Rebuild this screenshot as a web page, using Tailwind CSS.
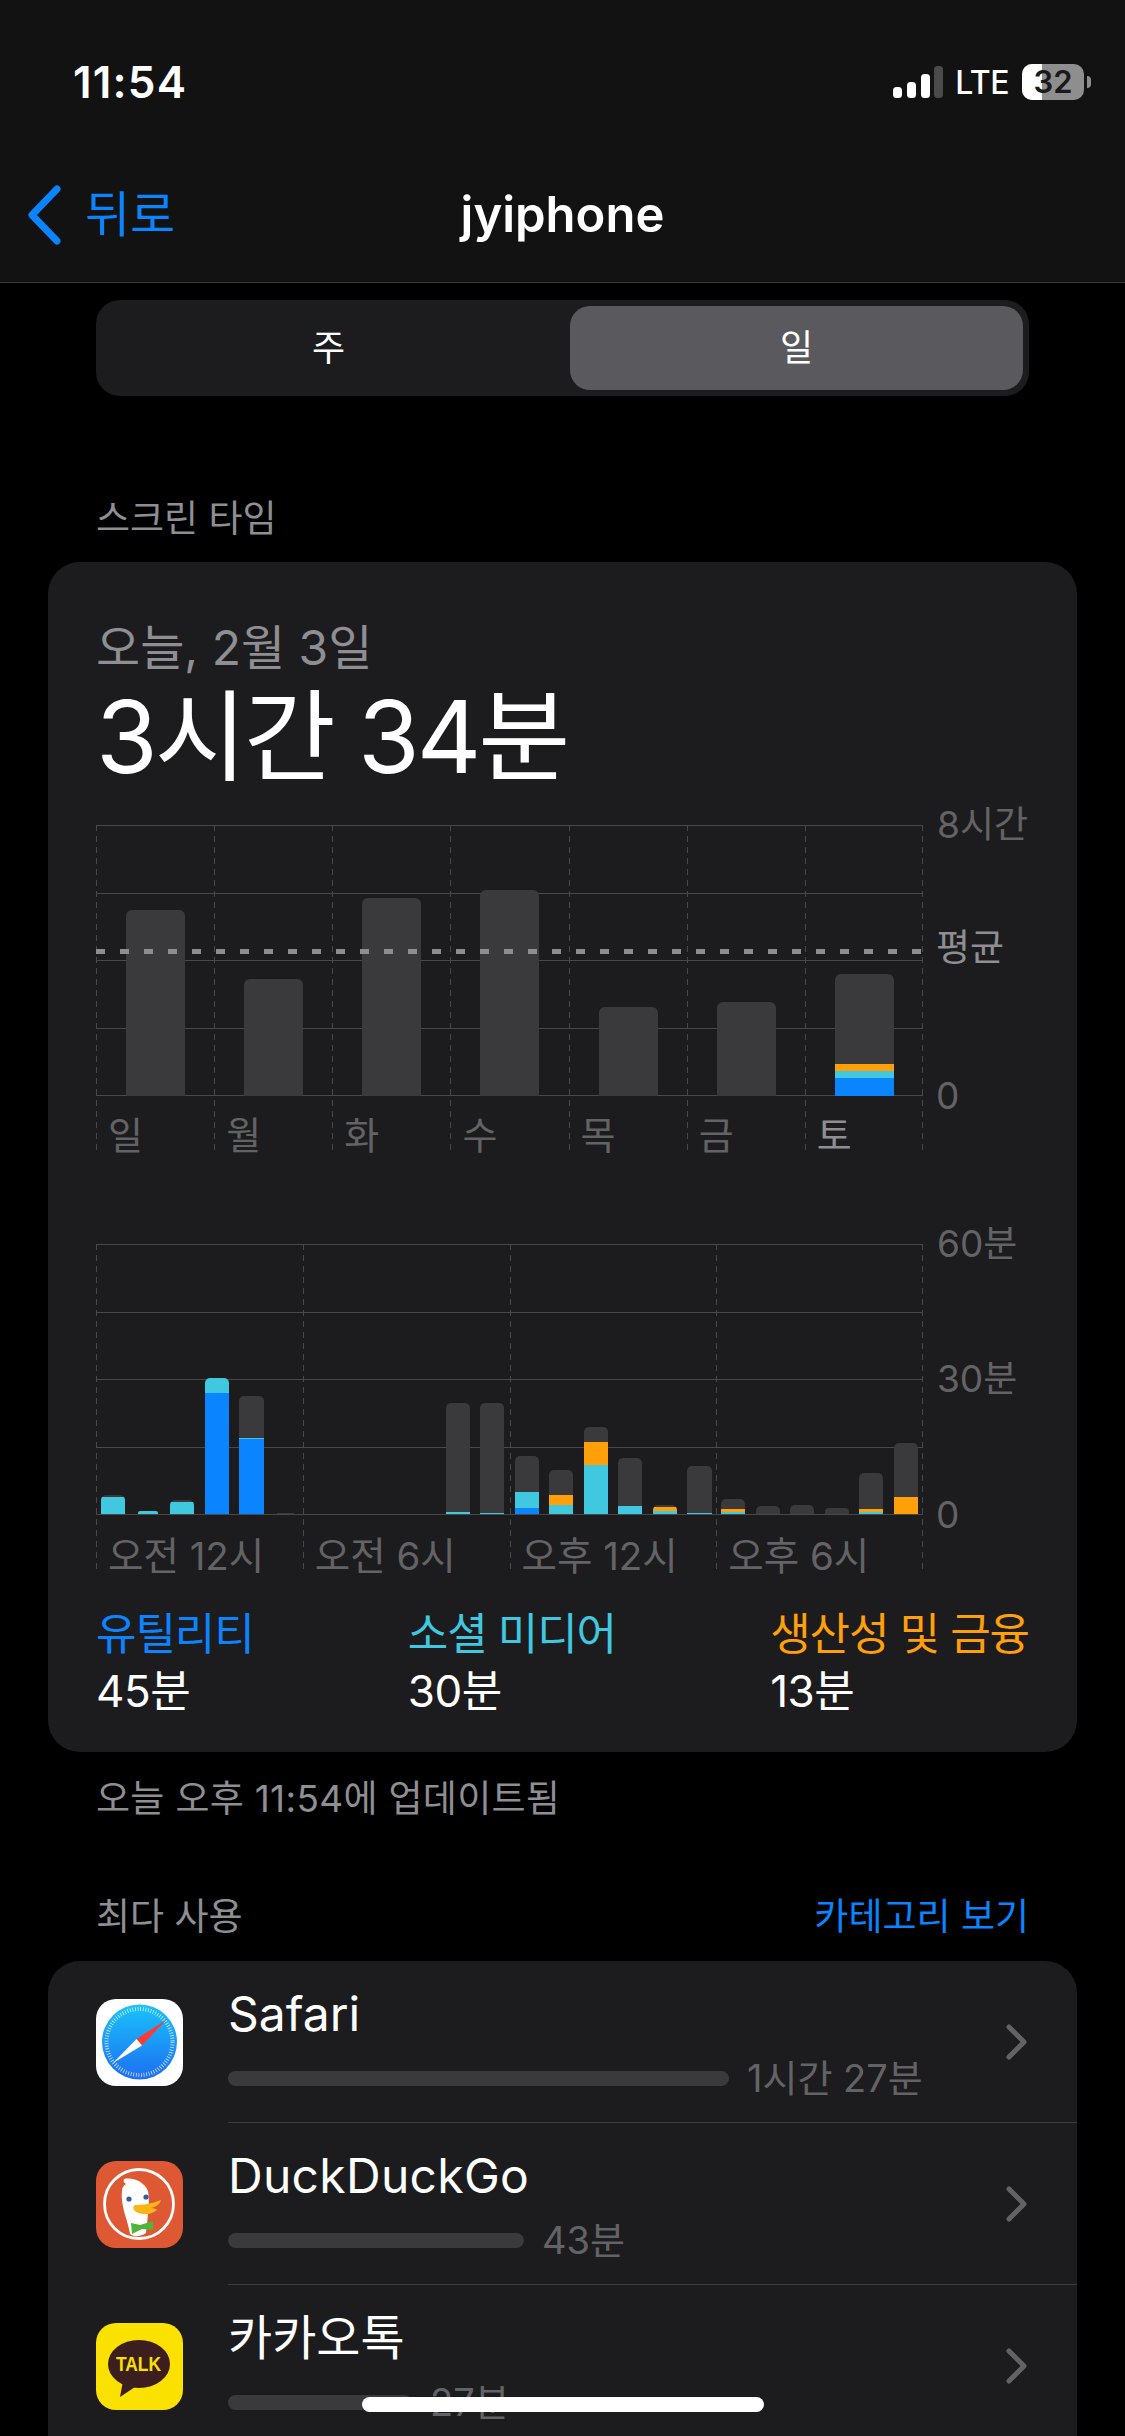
<!DOCTYPE html>
<html lang="ko">
<head>
<meta charset="utf-8">
<script src="https://cdn.jsdelivr.net/npm/@tailwindcss/browser@4"></script>
<title>jyiphone</title>
</head>
<body class="bg-black">
<div class="relative w-[1125px] h-[2436px] overflow-hidden bg-black text-white font-['Inter','Noto_Sans_CJK_KR',sans-serif]">

  <!-- Header -->
  <header class="h-[283px] bg-[#121212] border-b border-[#38383a]">
    <div class="pt-[64px] pl-[73px] pr-[34px] h-[100px] flex items-center justify-between">
      <span class="text-[44px] leading-[36px] font-semibold tracking-[1.2px]">11:54</span>
      <div class="flex items-center">
        <svg width="50" height="32" viewBox="0 0 50 32" class="mr-[12px]"><rect x="0" y="21" width="9" height="11" rx="3.5" fill="#fff"/><rect x="14" y="16" width="9" height="16" rx="3.5" fill="#fff"/><rect x="28" y="8" width="9" height="24" rx="3.5" fill="#fff"/><rect x="41" y="0" width="9" height="32" rx="3.5" fill="#4a4a4a"/></svg>
        <span class="text-[32px] leading-[36px] font-medium tracking-[-0.5px] mr-[13px] pt-[2px]">LTE</span>
        <div class="relative w-[62px] h-[36px] rounded-[10px] bg-[#8e8e8e] overflow-hidden flex items-center justify-center">
          <div class="absolute inset-y-0 left-0 w-[20px] bg-white"></div>
          <span class="relative text-[31px] leading-[36px] font-semibold text-[#1a1a1a]">32</span>
        </div>
        <div class="ml-[3px] w-[4px] h-[12px] rounded-r-full bg-[#8e8e8e]"></div>
      </div>
    </div>
    <div class="mt-[85px] h-[56px] grid grid-cols-[1fr_auto_1fr] items-center">
      <div class="flex items-center pl-[27px] text-[#0a84ff]">
        <svg width="36" height="60" viewBox="0 0 36 60" class="mr-[22px]"><path d="M30 4 L5 30 L30 56" fill="none" stroke="#0a84ff" stroke-width="7" stroke-linecap="round" stroke-linejoin="round"/></svg>
        <span class="text-[49px] leading-[56px]">뒤로</span>
      </div>
      <span class="text-[49px] leading-[56px] font-semibold">jyiphone</span>
      <span></span>
    </div>
  </header>

  <!-- Segment -->
  <div class="mt-[17px] mx-[96px] h-[96px] rounded-[24px] bg-[#1c1c1e] p-[6px] grid grid-cols-2 gap-[15px] text-[36px]">
    <div class="flex items-center justify-center">주</div>
    <div class="flex items-center justify-center rounded-[20px] bg-[#5a5a5e]">일</div>
  </div>

  <div class="mt-[101px] mx-[96px] h-[44px] flex items-center text-[37px] text-[#8e8e93]">스크린 타임</div>

  <!-- Screen time card -->
  <section class="mt-[21px] mx-[48px] h-[1190px] rounded-[32px] bg-[#1c1c1e] px-[48px] pt-[58px]">
    <div class="h-[56px] flex items-center text-[48px] text-[#8e8e93]">오늘, 2월 3일</div>
    <div class="mt-[6px] h-[110px] flex items-center text-[100px] leading-none tracking-[-3px]">3시간 34분</div>

    <!-- Weekly chart -->
    <div class="relative mt-[33px] w-[827px] h-[330px]">
      <div class="absolute inset-x-0 top-0 h-[271px] grid grid-rows-4 border-b border-[#48484a]">
        <div class="border-t border-[#48484a]"></div>
        <div class="border-t border-[#48484a]"></div>
        <div class="border-t border-[#48484a]"></div>
        <div class="border-t border-[#48484a]"></div>
      </div>
      <div class="absolute inset-0 grid grid-cols-7 text-[38px] text-[#636366]">
        <div class="relative h-full bg-[repeating-linear-gradient(to_bottom,#48484a_0,#48484a_6px,transparent_6px,transparent_11px)] bg-no-repeat bg-[length:1px_100%]"><span class="absolute left-[12px] top-[285px] leading-[50px]">일</span><div class="absolute bottom-[59px] left-[30px] w-[59px] h-[186px] rounded-t-[6px] bg-[#3a3a3c]"></div></div>
        <div class="relative h-full bg-[repeating-linear-gradient(to_bottom,#48484a_0,#48484a_6px,transparent_6px,transparent_11px)] bg-no-repeat bg-[length:1px_100%]"><span class="absolute left-[12px] top-[285px] leading-[50px]">월</span><div class="absolute bottom-[59px] left-[30px] w-[59px] h-[117px] rounded-t-[6px] bg-[#3a3a3c]"></div></div>
        <div class="relative h-full bg-[repeating-linear-gradient(to_bottom,#48484a_0,#48484a_6px,transparent_6px,transparent_11px)] bg-no-repeat bg-[length:1px_100%]"><span class="absolute left-[12px] top-[285px] leading-[50px]">화</span><div class="absolute bottom-[59px] left-[30px] w-[59px] h-[198px] rounded-t-[6px] bg-[#3a3a3c]"></div></div>
        <div class="relative h-full bg-[repeating-linear-gradient(to_bottom,#48484a_0,#48484a_6px,transparent_6px,transparent_11px)] bg-no-repeat bg-[length:1px_100%]"><span class="absolute left-[12px] top-[285px] leading-[50px]">수</span><div class="absolute bottom-[59px] left-[30px] w-[59px] h-[206px] rounded-t-[6px] bg-[#3a3a3c]"></div></div>
        <div class="relative h-full bg-[repeating-linear-gradient(to_bottom,#48484a_0,#48484a_6px,transparent_6px,transparent_11px)] bg-no-repeat bg-[length:1px_100%]"><span class="absolute left-[12px] top-[285px] leading-[50px]">목</span><div class="absolute bottom-[59px] left-[30px] w-[59px] h-[89px] rounded-t-[6px] bg-[#3a3a3c]"></div></div>
        <div class="relative h-full bg-[repeating-linear-gradient(to_bottom,#48484a_0,#48484a_6px,transparent_6px,transparent_11px)] bg-no-repeat bg-[length:1px_100%]"><span class="absolute left-[12px] top-[285px] leading-[50px]">금</span><div class="absolute bottom-[59px] left-[30px] w-[59px] h-[94px] rounded-t-[6px] bg-[#3a3a3c]"></div></div>
        <div class="relative h-full bg-[repeating-linear-gradient(to_bottom,#48484a_0,#48484a_6px,transparent_6px,transparent_11px)] bg-no-repeat bg-[length:1px_100%]"><span class="absolute left-[12px] top-[285px] leading-[50px] text-[#8e8e93]">토</span>
          <div class="absolute bottom-[59px] left-[30px] w-[59px] h-[122px] rounded-t-[6px] overflow-hidden bg-[#3a3a3c] flex flex-col justify-end"><div class="h-[7px] bg-[#ff9f0a]"></div><div class="h-[7px] bg-[#40c8e0]"></div><div class="h-[18px] bg-[#0a84ff]"></div></div>
        </div>
      </div>
      <div class="absolute right-0 top-0 bottom-0 w-px bg-[repeating-linear-gradient(to_bottom,#48484a_0,#48484a_6px,transparent_6px,transparent_11px)]"></div>
      <div class="absolute inset-x-0 top-[124px] h-[5px] bg-[repeating-linear-gradient(to_right,#8e8e8e_0,#8e8e8e_9px,transparent_9px,transparent_24px)]"></div>
      <div class="text-[37px] leading-[50px] text-[#636366]">
        <span class="absolute left-[841px] top-[-25px] whitespace-nowrap">8시간</span>
        <span class="absolute left-[840px] top-[98px] whitespace-nowrap text-[#8e8e93]">평균</span>
        <span class="absolute left-[840px] top-[246px] whitespace-nowrap">0</span>
      </div>
    </div>

    <!-- Hourly chart -->
    <div class="relative mt-[89px] w-[827px] h-[329px]">
      <div class="absolute inset-x-0 top-0 h-[271px] grid grid-rows-4 border-b border-[#48484a]">
        <div class="border-t border-[#48484a]"></div>
        <div class="border-t border-[#48484a]"></div>
        <div class="border-t border-[#48484a]"></div>
        <div class="border-t border-[#48484a]"></div>
      </div>
      <div class="absolute inset-0 grid grid-cols-4 text-[38.5px] text-[#636366]">
        <div class="relative h-full bg-[repeating-linear-gradient(to_bottom,#48484a_0,#48484a_6px,transparent_6px,transparent_11px)] bg-no-repeat bg-[length:1px_100%]"><span class="absolute left-[12px] top-[287px] leading-[50px] whitespace-nowrap">오전 12시</span></div>
        <div class="relative h-full bg-[repeating-linear-gradient(to_bottom,#48484a_0,#48484a_6px,transparent_6px,transparent_11px)] bg-no-repeat bg-[length:1px_100%]"><span class="absolute left-[12px] top-[287px] leading-[50px] whitespace-nowrap">오전 6시</span></div>
        <div class="relative h-full bg-[repeating-linear-gradient(to_bottom,#48484a_0,#48484a_6px,transparent_6px,transparent_11px)] bg-no-repeat bg-[length:1px_100%]"><span class="absolute left-[12px] top-[287px] leading-[50px] whitespace-nowrap">오후 12시</span></div>
        <div class="relative h-full bg-[repeating-linear-gradient(to_bottom,#48484a_0,#48484a_6px,transparent_6px,transparent_11px)] bg-no-repeat bg-[length:1px_100%]"><span class="absolute left-[12px] top-[287px] leading-[50px] whitespace-nowrap">오후 6시</span></div>
      </div>
      <div class="absolute right-0 top-0 bottom-0 w-px bg-[repeating-linear-gradient(to_bottom,#48484a_0,#48484a_6px,transparent_6px,transparent_11px)]"></div>
      <div class="absolute inset-x-0 top-0 h-[270px] grid grid-cols-24 items-end justify-items-center">
        <div class="w-[24px] rounded-t-[5px] overflow-hidden"><div class="h-[2px] bg-[#3a3a3c]"></div><div class="h-[17px] bg-[#40c8e0]"></div></div>
        <div class="w-[20px] rounded-t-[2px] overflow-hidden"><div class="h-[3px] bg-[#40c8e0]"></div></div>
        <div class="w-[24px] rounded-t-[5px] overflow-hidden"><div class="h-[2px] bg-[#3a3a3c]"></div><div class="h-[12px] bg-[#40c8e0]"></div></div>
        <div class="w-[24px] rounded-t-[5px] overflow-hidden"><div class="h-[15px] bg-[#40c8e0]"></div><div class="h-[121px] bg-[#0a84ff]"></div></div>
        <div class="w-[25px] rounded-t-[5px] overflow-hidden"><div class="h-[42px] bg-[#3a3a3c]"></div><div class="h-[1px] bg-[#40c8e0]"></div><div class="h-[75px] bg-[#0a84ff]"></div></div>
        <div class="w-[17px] h-[1px] bg-[#3a3a3c]"></div>
        <div></div><div></div><div></div><div></div>
        <div class="w-[24px] rounded-t-[5px] overflow-hidden"><div class="h-[109px] bg-[#3a3a3c]"></div><div class="h-[2px] bg-[#40c8e0]"></div></div>
        <div class="w-[24px] rounded-t-[5px] overflow-hidden"><div class="h-[110px] bg-[#3a3a3c]"></div><div class="h-[1px] bg-[#40c8e0]"></div></div>
        <div class="w-[24px] rounded-t-[5px] overflow-hidden"><div class="h-[36px] bg-[#3a3a3c]"></div><div class="h-[16px] bg-[#40c8e0]"></div><div class="h-[6px] bg-[#0a84ff]"></div></div>
        <div class="w-[24px] rounded-t-[5px] overflow-hidden"><div class="h-[25px] bg-[#3a3a3c]"></div><div class="h-[10px] bg-[#ff9f0a]"></div><div class="h-[9px] bg-[#40c8e0]"></div></div>
        <div class="w-[24px] rounded-t-[5px] overflow-hidden"><div class="h-[15px] bg-[#3a3a3c]"></div><div class="h-[23px] bg-[#ff9f0a]"></div><div class="h-[49px] bg-[#40c8e0]"></div></div>
        <div class="w-[24px] rounded-t-[5px] overflow-hidden"><div class="h-[48px] bg-[#3a3a3c]"></div><div class="h-[8px] bg-[#40c8e0]"></div></div>
        <div class="w-[24px] rounded-t-[5px] overflow-hidden"><div class="h-[2px] bg-[#3a3a3c]"></div><div class="h-[4px] bg-[#ff9f0a]"></div><div class="h-[3px] bg-[#40c8e0]"></div></div>
        <div class="w-[25px] rounded-t-[5px] overflow-hidden"><div class="h-[47px] bg-[#3a3a3c]"></div><div class="h-[1px] bg-[#40c8e0]"></div></div>
        <div class="w-[24px] rounded-t-[5px] overflow-hidden"><div class="h-[10px] bg-[#3a3a3c]"></div><div class="h-[3px] bg-[#ff9f0a]"></div><div class="h-[2px] bg-[#40c8e0]"></div></div>
        <div class="w-[24px] h-[8px] rounded-t-[5px] bg-[#3a3a3c]"></div>
        <div class="w-[24px] h-[9px] rounded-t-[5px] bg-[#3a3a3c]"></div>
        <div class="w-[24px] h-[6px] rounded-t-[4px] bg-[#3a3a3c]"></div>
        <div class="w-[24px] rounded-t-[5px] overflow-hidden"><div class="h-[36px] bg-[#3a3a3c]"></div><div class="h-[3px] bg-[#ff9f0a]"></div><div class="h-[2px] bg-[#40c8e0]"></div></div>
        <div class="w-[24px] rounded-t-[5px] overflow-hidden"><div class="h-[54px] bg-[#3a3a3c]"></div><div class="h-[17px] bg-[#ff9f0a]"></div></div>
      </div>
      <div class="text-[37px] leading-[50px] text-[#636366]">
        <span class="absolute left-[841px] top-[-25px] whitespace-nowrap">60분</span>
        <span class="absolute left-[841px] top-[110px] whitespace-nowrap">30분</span>
        <span class="absolute left-[840px] top-[246px] whitespace-nowrap">0</span>
      </div>
    </div>

    <!-- Legend -->
    <div class="mt-[33px] flex justify-between">
      <div><div class="h-[56px] flex items-center text-[44px] tracking-[-1.1px] text-[#0a84ff] whitespace-nowrap">유틸리티</div><div class="mt-[4px] h-[50px] flex items-center text-[44px] tracking-[-0.5px]">45분</div></div>
      <div><div class="h-[56px] flex items-center text-[44px] tracking-[-1.1px] text-[#40c8e0] whitespace-nowrap">소셜 미디어</div><div class="mt-[4px] h-[50px] flex items-center text-[44px] tracking-[-0.5px]">30분</div></div>
      <div><div class="h-[56px] flex items-center text-[44px] tracking-[-1.1px] text-[#ff9f0a] whitespace-nowrap">생산성 및 금융</div><div class="mt-[4px] h-[50px] flex items-center text-[44px] tracking-[-0.5px]">13분</div></div>
    </div>
  </section>

  <div class="mt-[25px] mx-[96px] h-[44px] flex items-center text-[37px] tracking-[0.3px] text-[#8e8e93]">오늘 오후 11:54에 업데이트됨</div>

  <div class="mt-[74px] mx-[96px] h-[44px] flex items-center justify-between text-[37px] text-[#8e8e93]">
    <span>최다 사용</span>
    <span class="text-[#0a84ff]">카테고리 보기</span>
  </div>

  <!-- Most used -->
  <section class="mt-[22px] mx-[48px] h-[520px] rounded-t-[32px] bg-[#1c1c1e]">
    <div class="h-[162px] flex items-center pl-[48px]">
      <svg width="87" height="87" viewBox="0 0 87 87" class="shrink-0 rounded-[20px]">
        <defs><linearGradient id="sf" x1="0" y1="0" x2="0" y2="1"><stop offset="0" stop-color="#1ac3fb"/><stop offset="1" stop-color="#1d6ef1"/></linearGradient></defs>
        <rect width="87" height="87" fill="#fff"/>
        <circle cx="43.5" cy="43" r="37.5" fill="url(#sf)"/>
        <circle cx="43.5" cy="43" r="33" fill="none" stroke="#fff" stroke-opacity=".8" stroke-width="4" stroke-dasharray="0.8 1.8"/>
        <polygon points="70,21 40.5,40 46,46.5" fill="#ff3b30"/>
        <polygon points="17,64 40.5,40 46,46.5" fill="#fff"/>
      </svg>
      <div class="ml-[45px] flex-1 h-full flex items-center border-b border-[#3d3d40]">
        <div class="flex-1 self-stretch pt-[23px]">
          <div class="text-[48px] leading-[60px]">Safari</div>
          <div class="mt-[27px] flex items-center"><div class="w-[501px] h-[15px] rounded-full bg-[#3a3a3c]"></div><span class="ml-[18px] text-[38px] leading-[15px] text-[#636366] whitespace-nowrap">1시간 27분</span></div>
        </div>
        <svg width="21" height="36" viewBox="0 0 21 36" class="mr-[50px]"><path d="M3 3 L18 18 L3 33" fill="none" stroke="#636366" stroke-width="5" stroke-linecap="round" stroke-linejoin="round"/></svg>
      </div>
    </div>
    <div class="h-[162px] flex items-center pl-[48px]">
      <svg width="87" height="87" viewBox="0 0 87 87" class="shrink-0 rounded-[20px]">
        <rect width="87" height="87" fill="#de5833"/>
        <circle cx="43" cy="43" r="34.5" fill="none" stroke="#fff" stroke-width="2.8"/>
        <path d="M28 18 C36 16 48 20 52 30 C54 40 52 54 50 72 C44 76 38 76 34 73 C32 60 24 44 26 30 C26 26 28 24 30 23 C28 22 27 20 28 18 Z" fill="#fff"/>
        <path d="M39 44 C46 44 56 43 65 39 C64 43 60 46 55 47 C58 47 60 48 61 49 C54 55 42 54 38 49 C37 47 37 45 39 44 Z" fill="#fdb515"/>
        <path d="M35 62 L44 64 L57 60 L57 69 L46 68 L36 73 Z" fill="#4db53a"/>
        <circle cx="33" cy="38" r="2.6" fill="#3a5ba0"/><circle cx="50" cy="36" r="2.6" fill="#3a5ba0"/>
      </svg>
      <div class="ml-[45px] flex-1 h-full flex items-center border-b border-[#3d3d40]">
        <div class="flex-1 self-stretch pt-[23px]">
          <div class="text-[48px] leading-[60px] tracking-[0.3px]">DuckDuckGo</div>
          <div class="mt-[27px] flex items-center"><div class="w-[296px] h-[15px] rounded-full bg-[#3a3a3c]"></div><span class="ml-[18px] text-[38px] leading-[15px] text-[#636366] whitespace-nowrap">43분</span></div>
        </div>
        <svg width="21" height="36" viewBox="0 0 21 36" class="mr-[50px]"><path d="M3 3 L18 18 L3 33" fill="none" stroke="#636366" stroke-width="5" stroke-linecap="round" stroke-linejoin="round"/></svg>
      </div>
    </div>
    <div class="h-[162px] flex items-center pl-[48px]">
      <svg width="87" height="87" viewBox="0 0 87 87" class="shrink-0 rounded-[20px]">
        <rect width="87" height="87" fill="#fae100"/>
        <ellipse cx="43" cy="41" rx="31" ry="24" fill="#3c1e1e"/>
        <path d="M27 58 L24 74 L42 62 Z" fill="#3c1e1e"/>
        <text x="20" y="48" textLength="45" lengthAdjust="spacingAndGlyphs" font-family="Liberation Sans" font-weight="700" font-size="19.5" fill="#fae100">TALK</text>
      </svg>
      <div class="ml-[45px] flex-1 h-full flex items-center">
        <div class="flex-1 self-stretch pt-[23px]">
          <div class="text-[48px] leading-[60px]">카카오톡</div>
          <div class="mt-[27px] flex items-center"><div class="w-[184px] h-[15px] rounded-full bg-[#3a3a3c]"></div><span class="ml-[18px] text-[38px] leading-[15px] text-[#636366] whitespace-nowrap">27분</span></div>
        </div>
        <svg width="21" height="36" viewBox="0 0 21 36" class="mr-[50px]"><path d="M3 3 L18 18 L3 33" fill="none" stroke="#636366" stroke-width="5" stroke-linecap="round" stroke-linejoin="round"/></svg>
      </div>
    </div>
  </section>

  <!-- Home indicator -->
  <div class="absolute left-[362px] top-[2397px] w-[402px] h-[15px] rounded-full bg-white"></div>
</div>
</body>
</html>
